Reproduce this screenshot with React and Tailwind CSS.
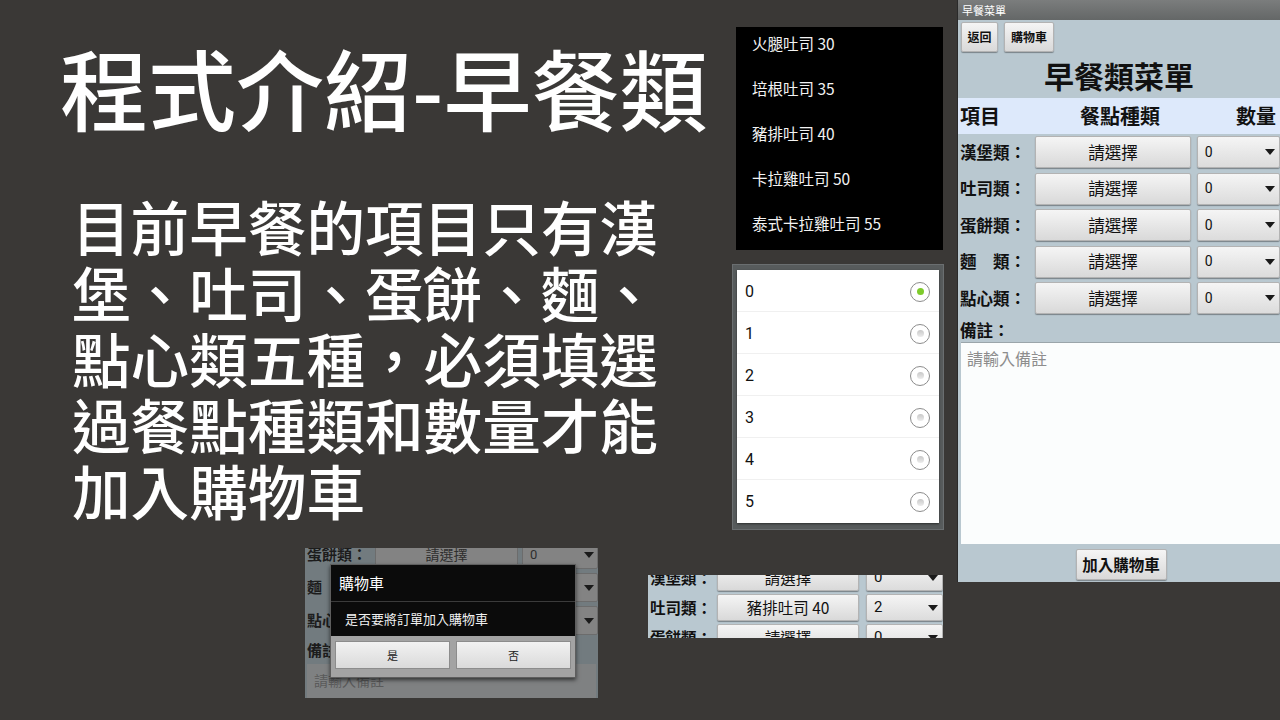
import React from 'react';

const cjk = { fontFamily: '"Noto Sans CJK TC", "Noto Sans", sans-serif' };

const bodyLines = [
    '目前早餐的項目只有漢',
    '堡、吐司、蛋餅、麵、',
    '點心類五種，必須填選',
    '過餐點種類和數量才能',
    '加入購物車'
];

const toastItems = ['火腿吐司 30', '培根吐司 35', '豬排吐司 40', '卡拉雞吐司 50', '泰式卡拉雞吐司 55'];

const menuRows = ['漢堡類：', '吐司類：', '蛋餅類：', '麵　類：', '點心類：'];

const Caret = ({ className = '' }) => (
    <svg width="10" height="6" viewBox="0 0 10 6" className={className}>
        <path d="M0 0 L10 0 L5 6 Z" fill="#1a1a1a" />
    </svg>
);

const HoloButton = ({ children, className = '' }) => (
    <div
        className={`flex items-center justify-center bg-gradient-to-b from-[#f5f5f5] to-[#d9d9d9] border border-[#b3b3b3] rounded-[2px] shadow-[0_1px_1px_rgba(0,0,0,0.35)] text-[#111] ${className}`}
    >
        {children}
    </div>
);

const Spinner = ({ value, className = '', textClass = 'text-[14px]' }) => (
    <div
        className={`flex items-center justify-between pl-[7px] pr-[4px] bg-gradient-to-b from-[#f5f5f5] to-[#dcdcdc] border border-[#b3b3b3] rounded-[2px] shadow-[0_1px_1px_rgba(0,0,0,0.35)] ${className}`}
    >
        <span className={`${textClass} text-[#111]`} style={{ fontFamily: 'Roboto, sans-serif' }}>{value}</span>
        <Caret />
    </div>
);

const PhoneMenu = () => (
    <div className="absolute left-[957px] top-0 w-[323px] h-[582px] bg-[#b9c8d0] flex flex-col border-l border-[#2a2a2a]" style={cjk}>
        <div className="h-[20px] bg-gradient-to-b from-[#7b7d7d] to-[#646767] text-white text-[11px] leading-[20px] pl-[4px]">早餐菜單</div>
        <div className="flex gap-[6px] pl-[3px] pt-[2px] h-[32px]">
            <HoloButton className="w-[37px] h-[30px] text-[12px] font-bold">返回</HoloButton>
            <HoloButton className="w-[50px] h-[30px] text-[12px] font-bold">購物車</HoloButton>
        </div>
        <div className="h-[46px] flex items-center justify-center text-[30px] font-bold text-[#111] leading-none">早餐類菜單</div>
        <div className="h-[36px] bg-[#dde9fb] flex items-center text-[20px] font-bold text-[#111] pl-[2px] pr-[4px]">
            <span className="w-[66px]">項目</span>
            <span className="flex-1 text-center pr-[22px]">餐點種類</span>
            <span>數量</span>
        </div>
        <div className="flex flex-col gap-[4.5px] pt-[2px]">
            {menuRows.map((label) => (
                <div key={label} className="flex items-center h-[32px]">
                    <span className="w-[78px] pl-[2px] text-[16.5px] font-bold text-[#111]">{label}</span>
                    <HoloButton className="w-[157px] h-[32px] text-[16.5px]">請選擇</HoloButton>
                    <Spinner value="0" className="ml-[6px] w-[84px] h-[32px]" />
                </div>
            ))}
        </div>
        <div className="pl-[2px] pt-[4px] h-[28px] text-[16.5px] font-bold text-[#111]">備註：</div>
        <div className="ml-[3px] h-[202px] bg-[#fbfdfd] border-t border-[#9aa5aa] text-[16px] text-[#8d8d8d] pl-[6px] pt-[3px]">請輸入備註</div>
        <div className="flex justify-center pt-[5px] pl-[4px]">
            <HoloButton className="w-[91px] h-[31px] text-[15.5px] font-bold">加入購物車</HoloButton>
        </div>
    </div>
);

const ToastList = () => (
    <div className="absolute left-[736px] top-[27px] w-[207px] h-[223px] bg-black overflow-hidden" style={cjk}>
        <div className="flex flex-col mt-[-6px]">
            {toastItems.map((t) => (
                <div key={t} className="h-[45px] flex items-center pl-[16px] text-[15.5px] text-[#f2f2f2]">{t}</div>
            ))}
        </div>
    </div>
);

const Radio = ({ on }) => (
    <div className="w-[20px] h-[20px] rounded-full border-[1.5px] border-[#8c8c8c] bg-white flex items-center justify-center">
        <div className={`w-[7px] h-[7px] rounded-full ${on ? 'bg-[#7ecb2c]' : 'bg-gradient-to-b from-[#c8c8c8] to-[#ececec]'}`} />
    </div>
);

const RadioDialog = () => (
    <div className="absolute left-[732px] top-[264px] w-[212px] h-[266px] bg-[#575b5c] border border-[#6a6e70] p-[4px] pt-[5px]">
        <div className="bg-white h-[253px] flex flex-col shadow-[0_1px_2px_rgba(0,0,0,0.5)]">
            {['0', '1', '2', '3', '4', '5'].map((n, i) => (
                <div
                    key={n}
                    className={`h-[42px] flex items-center justify-between pl-[8px] pr-[9px] pt-[2px] ${i < 5 ? 'border-b border-[#f0f0f0]' : ''}`}
                >
                    <span className="text-[16px] text-[#111]" style={{ fontFamily: 'Roboto, sans-serif' }}>{n}</span>
                    <Radio on={i === 0} />
                </div>
            ))}
        </div>
    </div>
);

const DimButton = ({ children, className = '' }) => (
    <div className={`flex items-center justify-center bg-[#838383] border border-[#6c6c6c] rounded-[2px] text-[#2e2e2e] ${className}`}>{children}</div>
);

const ConfirmShot = () => (
    <div className="absolute left-[305px] top-[548px] w-[293px] h-[150px] bg-[#727b7f] overflow-hidden" style={cjk}>
        <div className="flex flex-col gap-[4px] mt-[-8px]">
            {['蛋餅類：', '麵　類：', '點心類：'].map((label) => (
                <div key={label} className="flex items-center h-[29px]">
                    <span className="w-[70px] pl-[2px] text-[15px] font-bold text-[#1c1c1c]">{label}</span>
                    <DimButton className="w-[143px] h-[29px] text-[14px]">請選擇</DimButton>
                    <div className="ml-[4px] flex-1 h-[29px] bg-[#838383] border border-[#6c6c6c] rounded-[2px] flex items-center justify-between pl-[7px] pr-[3px]">
                        <span className="text-[13px] text-[#2e2e2e]" style={{ fontFamily: 'Roboto, sans-serif' }}>0</span>
                        <Caret />
                    </div>
                </div>
            ))}
        </div>
        <div className="pl-[2px] pt-[4px] text-[15px] font-bold text-[#1c1c1c]">備註：</div>
        <div className="mx-[2px] mt-[2px] h-[40px] bg-[#7f8182] text-[14px] text-[#5a5a5a] pl-[7px] pt-[6px]">請輸入備註</div>
        <div className="absolute left-[25px] top-[16px] w-[246px] h-[114px] bg-[#0b0b0b] border border-[#5e5e5e] shadow-[0_2px_4px_rgba(0,0,0,0.6)] flex flex-col">
            <div className="h-[37px] flex items-center pl-[8px] text-[15px] text-white border-b border-[#3b3b3b]">購物車</div>
            <div className="h-[34px] flex items-center pl-[14px] text-[13px] text-[#f0f0f0]">是否要將訂單加入購物車</div>
            <div className="flex-1 bg-[#a3a3a3] flex gap-[6px] px-[4px] pt-[5px]">
                <div className="flex-1 h-[28px] flex items-center justify-center bg-gradient-to-b from-[#f2f2f2] to-[#dadada] border border-[#8c8c8c] text-[11px] text-[#222]">是</div>
                <div className="flex-1 h-[28px] flex items-center justify-center bg-gradient-to-b from-[#f2f2f2] to-[#dadada] border border-[#8c8c8c] text-[11px] text-[#222]">否</div>
            </div>
        </div>
    </div>
);

const SelectedRowShot = () => (
    <div className="absolute left-[648px] top-[575px] w-[295px] h-[63px] bg-[#b9c8d0] overflow-hidden" style={cjk}>
        <div className="flex flex-col gap-[3px] mt-[-11px]">
            {[
                { label: '漢堡類：', text: '請選擇', n: '0' },
                { label: '吐司類：', text: '豬排吐司 40', n: '2' },
                { label: '蛋餅類：', text: '請選擇', n: '0' }
            ].map((r) => (
                <div key={r.label} className="flex items-center h-[27px]">
                    <span className="w-[69px] pl-[2px] text-[15.5px] font-bold text-[#111]">{r.label}</span>
                    <HoloButton className="w-[142px] h-[27px] text-[15.5px]">{r.text}</HoloButton>
                    <Spinner value={r.n} className="ml-[7px] flex-1 h-[27px]" textClass="text-[15px]" />
                </div>
            ))}
        </div>
    </div>
);

export default function App() {
    return (
        <div className="relative w-[1280px] h-[720px] bg-[#3a3836] overflow-hidden" style={cjk}>
            <div className="absolute left-[60px] top-[36px] text-[88px] leading-[100px] font-medium text-white whitespace-nowrap">
                程式介紹-早餐類
            </div>
            <div className="absolute left-[72px] top-[193px] flex flex-col text-[58.6px] leading-[66px] font-medium text-white whitespace-nowrap">
                {bodyLines.map((l) => (
                    <span key={l}>{l}</span>
                ))}
            </div>
            <ToastList />
            <RadioDialog />
            <ConfirmShot />
            <SelectedRowShot />
            <PhoneMenu />
        </div>
    );
}
